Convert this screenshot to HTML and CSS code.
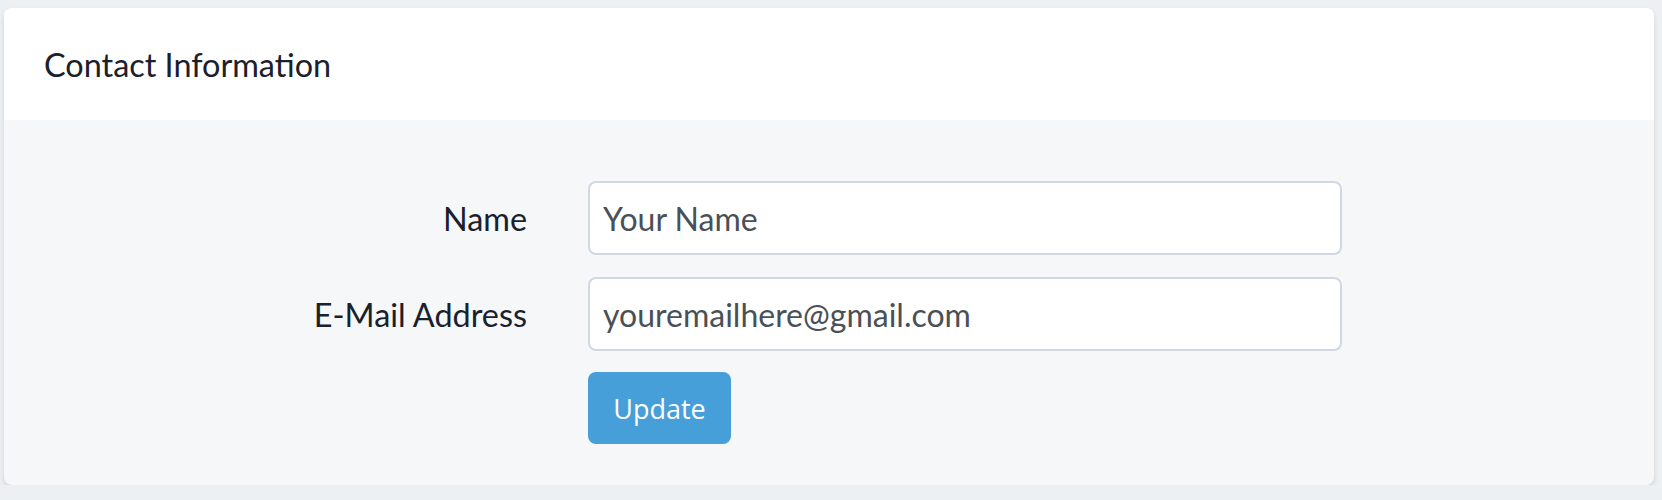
FILE: index.html
```html
<!DOCTYPE html>
<html lang="en">
<head>
    <meta charset="UTF-8">
    <meta name="viewport" content="width=device-width, initial-scale=1.0">
    <title>Contact Information</title>
    <link rel="stylesheet" href="styles.css">
</head>
<body>
    <div class="card">
        <div class="card-header">Contact Information</div>
        <div class="card-body">
            <form class="form-grid">
                <!-- Name -->
                <label class="form-label" for="name">Name</label>
                <input type="text" id="name" class="form-control" placeholder="Your Name">

                <!-- E-Mail -->
                <label class="form-label" for="email">E-Mail Address</label>
                <input type="email" id="email" class="form-control" value="youremailhere@gmail.com">

                <div class="form-actions">
                    <button type="button" class="btn-primary">Update</button>
                </div>
            </form>
        </div>
    </div>
</body>
</html>
```

FILE: styles.css
```css
body {
    font-family: 'Lato', sans-serif;
    margin: 0;
    padding: 8px 8px 0 4px;
    background: #edf0f3;
    color: #1a202c;
}

.card {
    width: 1650px;
    border-radius: 8px;
    background: #f5f7f9;
    box-shadow: 0 3px 5px rgba(0, 0, 0, 0.12);
    overflow: hidden;
}

.card-header {
    height: 112px;
    display: flex;
    align-items: center;
    padding-left: 40px;
    background: #fff;
    font-size: 32.4px;
}

.card-body {
    padding: 61px 0 41px;
}

.form-grid {
    display: grid;
    grid-template-columns: 523px 754px;
    column-gap: 61px;
    row-gap: 22px;
    align-items: center;
}

.form-label {
    text-align: right;
    font-size: 32.4px;
}

.form-control {
    height: 74px;
    box-sizing: border-box;
    padding: 0 13px;
    border: 2px solid #cfd8e3;
    border-radius: 8px;
    background: #fff;
    font-family: 'Lato', sans-serif;
    font-size: 32px;
    color: #495057;
    outline: none;
}

.form-control::placeholder {
    color: #495057;
    opacity: 1;
}

.form-actions {
    grid-column: 2;
    margin-top: -1px;
}

.btn-primary {
    width: 143px;
    height: 72px;
    border: none;
    border-radius: 8px;
    background: #479fda;
    color: #fff;
    font-family: 'Open Sans', sans-serif;
    font-size: 27px;
    cursor: pointer;
}
```
